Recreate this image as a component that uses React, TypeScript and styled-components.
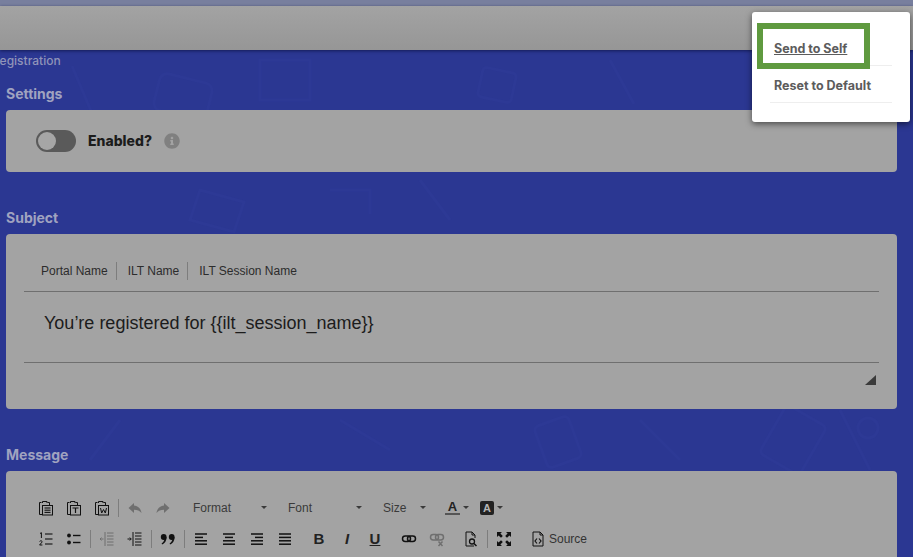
import { FC, ReactNode } from "react";
import styled, { createGlobalStyle } from "styled-components";
import { FaInfoCircle } from "react-icons/fa";

const Global = createGlobalStyle`
  html, body {
    margin: 0;
    padding: 0;
    background: #2b3792;
  }
`;

const UI_FONT = `"Inter", "Noto Sans", sans-serif`;
const EDITOR_FONT = `"Liberation Sans", Arial, sans-serif`;

const Root = styled.div`
  position: relative;
  width: 913px;
  height: 557px;
  overflow: hidden;
  background: #2b3792;
  font-family: ${UI_FONT};
`;
const Pattern = styled.svg`
  position: absolute;
  left: 0;
  top: 0;
  width: 913px;
  height: 557px;
`;
const TopStrip = styled.div`
  position: relative;
  height: 6px;
  background: #787f9e;
`;
const Header = styled.div`
  position: relative;
  height: 44px;
  background: linear-gradient(180deg, #a3a3a3 0%, #969696 100%);
  box-shadow: 0 1px 3px rgba(10, 15, 60, 0.7);
`;
const Content = styled.div`
  position: relative;
  padding: 0 16px 0 6px;
`;
const Crumb = styled.div`
  margin: 4px 0 0 -14px;
  height: 14px;
  font-size: 12px;
  line-height: 14px;
  font-weight: 500;
  color: #9094b9;
`;
const Heading = styled.div<{ $top: number }>`
  margin-top: ${(p) => p.$top}px;
  height: 16px;
  font-size: 14px;
  line-height: 16px;
  font-weight: 700;
  color: #a0a3c0;
`;
const Card = styled.div`
  margin-top: 8px;
  background: #a3a3a3;
  border-radius: 4px;
`;
const SettingsCard = styled(Card)`
  height: 62px;
  padding-left: 30px;
  display: flex;
  align-items: center;
`;
const Toggle = styled.div`
  width: 40px;
  height: 22px;
  box-sizing: border-box;
  border-radius: 11px;
  background: #5a5a5a;
  padding: 2px;
`;
const Knob = styled.div`
  width: 18px;
  height: 18px;
  border-radius: 50%;
  background: #a6a6a6;
`;
const EnabledLabel = styled.div`
  margin: 0 0 2px 12px;
  font-size: 14px;
  font-weight: 800;
  color: #1c1c1c;
`;
const InfoBadge = styled.div`
  margin-left: 12px;
  display: flex;
  color: #808080;
  font-size: 16px;
`;
const SubjectCard = styled(Card)`
  height: 175px;
  padding: 0 18px;
  font-family: ${EDITOR_FONT};
  display: flex;
  flex-direction: column;
`;
const Tags = styled.div`
  height: 58px;
  box-sizing: border-box;
  padding: 28px 0 0 17px;
  display: flex;
  border-bottom: 1px solid #6f6f6f;
`;
const Tag = styled.div`
  height: 18px;
  line-height: 18px;
  font-size: 12px;
  color: #2c2c2c;
  padding-right: 8px;
  margin-right: 11px;
  border-right: 1px solid #7d7d7d;
  &:last-child {
    border-right: none;
  }
`;
const SubjectText = styled.div`
  height: 71px;
  box-sizing: border-box;
  padding: 20px 0 0 20px;
  line-height: 22px;
  font-size: 18px;
  color: #1c1c1c;
  border-bottom: 1px solid #6f6f6f;
`;
const Grip = styled.div`
  align-self: flex-end;
  margin: 12px 3px 0 0;
  width: 0;
  height: 0;
  border-style: solid;
  border-width: 0 0 10px 11px;
  border-color: transparent transparent #3a3a3a transparent;
`;
const MessageCard = styled(Card)`
  height: 120px;
  padding: 21px 0 0 26px;
  font-family: ${EDITOR_FONT};
`;
const ToolRow = styled.div`
  height: 31px;
  display: flex;
  align-items: center;
`;
const Tool = styled.div<{ $off?: boolean; $gap?: number }>`
  width: 28px;
  height: 24px;
  margin-left: ${(p) => p.$gap ?? 0}px;
  display: flex;
  align-items: center;
  justify-content: center;
  color: #111;
  opacity: ${(p) => (p.$off ? 0.35 : 1)};
`;
const Sep = styled.div`
  width: 1px;
  height: 18px;
  margin: 0 2px;
  background: #7d7d7d;
`;
const Combo = styled.div<{ $w: number }>`
  width: ${(p) => p.$w}px;
  box-sizing: border-box;
  padding-left: 16px;
  display: flex;
  align-items: center;
  justify-content: space-between;
  padding-right: 5px;
  font-size: 12px;
  color: #3a3a3a;
`;
const Caret = styled.span`
  width: 0;
  height: 0;
  border-style: solid;
  border-width: 3px 3px 0 3px;
  border-color: #3a3a3a transparent transparent transparent;
`;
const ColorTool = styled.div<{ $gap: number }>`
  margin-left: ${(p) => p.$gap}px;
  display: flex;
  align-items: center;
  gap: 3px;
`;
const LetterA = styled.div`
  width: 15px;
  text-align: center;
  font-size: 13px;
  line-height: 13px;
  font-weight: 700;
  color: #222;
  border-bottom: 2px solid #555;
`;
const LetterABox = styled.div`
  width: 14px;
  height: 14px;
  border-radius: 2px;
  background: #222;
  color: #b5b5b5;
  text-align: center;
  font-size: 11px;
  line-height: 14px;
  font-weight: 700;
`;
const Glyph = styled.span<{ $italic?: boolean; $under?: boolean }>`
  font-family: ${EDITOR_FONT};
  font-size: 15px;
  font-weight: 700;
  color: #222;
  font-style: ${(p) => (p.$italic ? "italic" : "normal")};
  text-decoration: ${(p) => (p.$under ? "underline" : "none")};
`;
const SourceTool = styled.div`
  margin-left: 5px;
  padding-left: 7px;
  display: flex;
  align-items: center;
  gap: 3px;
  font-size: 12px;
  color: #333;
`;
const Popup = styled.div`
  position: absolute;
  left: 752px;
  top: 12px;
  width: 158px;
  height: 110px;
  box-sizing: border-box;
  padding: 17px 18px 0;
  background: #fff;
  border-radius: 3px;
  box-shadow: 0 2px 6px rgba(0, 0, 0, 0.55);
`;
const PopupItem = styled.div<{ $active?: boolean }>`
  height: 37px;
  box-sizing: border-box;
  padding: 12px 0 0 4px;
  font-size: 12.5px;
  line-height: 15px;
  font-weight: 700;
  color: #5c5c5c;
  border-bottom: 1px solid #eeeeee;
  text-decoration: ${(p) => (p.$active ? "underline" : "none")};
`;
const Highlight = styled.div`
  position: absolute;
  left: 757px;
  top: 23px;
  width: 113px;
  height: 46px;
  box-sizing: border-box;
  border: 6px solid #5f9a3f;
`;

const Icon: FC<{ children: ReactNode; w?: number; h?: number }> = ({ children, w = 16, h = 16 }) => (
  <svg width={w} height={h} viewBox="0 0 16 16" fill="none" stroke="#111" strokeWidth="1">
    {children}
  </svg>
);

const Clip: FC<{ inner: ReactNode }> = ({ inner }) => (
  <Icon>
    <path d="M3.500 2.500H1.500v12H4M9.500 2.500H11.500V5" />
    <path d="M4.500 3V1.500h4.500V3" />
    <rect x="4.500" y="5.500" width="10" height="9.500" />
    {inner}
  </Icon>
);

const lines = (ys: number[], x1: number, x2: number, sw = 1.1) =>
  ys.map((y) => <line key={y} x1={x1} x2={x2} y1={y} y2={y} strokeWidth={sw} />);

const Align: FC<{ rows: [number, number][] }> = ({ rows }) => (
  <Icon>
    {rows.map(([a, b], i) => (
      <line key={i} x1={a} x2={b} y1={3 + i * 3.4} y2={3 + i * 3.4} strokeWidth="1.5" />
    ))}
  </Icon>
);

const App: FC = () => (
  <Root>
    <Global />
    <Pattern viewBox="0 0 913 557" fill="none" stroke="#2d3995" strokeWidth="3">
      <rect x="156" y="78" width="54" height="38" rx="8" transform="rotate(14 183 97)" />
      <path d="M72 66l22 52M260 60h50v40h-50z" />
      <rect x="770" y="412" width="46" height="56" rx="5" transform="rotate(30 793 440)" />
      <circle cx="868" cy="428" r="10" />
      <path d="M840 410l30 60M200 190l44 12-10 30-44-12zM420 180l30 40M640 420l40 40M120 420l-30 40M330 190h40v24" />
      <rect x="540" y="420" width="36" height="44" rx="5" transform="rotate(-20 558 442)" />
      <rect x="480" y="70" width="34" height="30" rx="4" transform="rotate(12 497 85)" />
      <path d="M610 60l24 44M340 420l50 30" />
    </Pattern>
    <TopStrip />
    <Header />
    <Content>
      <Crumb>Registration</Crumb>
      <Heading $top={18}>Settings</Heading>
      <SettingsCard>
        <Toggle>
          <Knob />
        </Toggle>
        <EnabledLabel>Enabled?</EnabledLabel>
        <InfoBadge>
          <FaInfoCircle />
        </InfoBadge>
      </SettingsCard>
      <Heading $top={38}>Subject</Heading>
      <SubjectCard>
        <Tags>
          <Tag>Portal Name</Tag>
          <Tag>ILT Name</Tag>
          <Tag>ILT Session Name</Tag>
        </Tags>
        <SubjectText>You’re registered for {"{{ilt_session_name}}"}</SubjectText>
        <Grip />
      </SubjectCard>
      <Heading $top={38}>Message</Heading>
      <MessageCard>
        <ToolRow>
          <Tool>
            <Clip inner={lines([8, 10.2, 12.4], 6.500, 12.500)} />
          </Tool>
          <Tool>
            <Clip inner={<path d="M6.500 8h6M9.500 8v5" strokeWidth="1.2" />} />
          </Tool>
          <Tool>
            <Clip inner={<path d="M6.500 8l1.200 5 1.800-3.500 1.800 3.500L12.500 8" />} />
          </Tool>
          <Sep />
          <Tool $off>
            <Icon>
              <path d="M7 3L1.500 8 7 13V9.800c3.500 0 5.500.8 7.500 3.200-.6-4-3-7-7.500-7.400z" fill="#111" stroke="none" />
            </Icon>
          </Tool>
          <Tool $off>
            <Icon>
              <path d="M9 3l5.500 5L9 13V9.800c-3.500 0-5.500.8-7.500 3.200.6-4 3-7 7.500-7.400z" fill="#111" stroke="none" />
            </Icon>
          </Tool>
          <Combo $w={95}>
            Format
            <Caret />
          </Combo>
          <Combo $w={95}>
            Font
            <Caret />
          </Combo>
          <Combo $w={64}>
            Size
            <Caret />
          </Combo>
          <ColorTool $gap={14}>
            <LetterA>A</LetterA>
            <Caret />
          </ColorTool>
          <ColorTool $gap={11}>
            <LetterABox>A</LetterABox>
            <Caret />
          </ColorTool>
        </ToolRow>
        <ToolRow>
          <Tool>
            <Icon>
              {lines([3, 8, 13], 7, 14.500)}
              <path d="M2 2.500l1.400-.8V7M1.600 10.500c.6-1.200 3-.8 2.400.6L1.600 14h2.800" strokeWidth="1" />
            </Icon>
          </Tool>
          <Tool>
            <Icon>
              {lines([4.500, 11.500], 7, 14.500, 1.400)}
              <circle cx="3" cy="4.500" r="1.900" fill="#111" stroke="none" />
              <circle cx="3" cy="11.500" r="1.900" fill="#111" stroke="none" />
            </Icon>
          </Tool>
          <Sep />
          <Tool $off>
            <Icon>
              {lines([2, 5, 8, 11, 14], 8, 14.500, 1)}
              <path d="M6 1v14M1 8h3.500M2.500 6.500L1 8l1.500 1.500" strokeWidth="1" />
            </Icon>
          </Tool>
          <Tool>
            <Icon>
              {lines([2, 5, 8, 11, 14], 8, 14.500, 1)}
              <path d="M6 1v14M.5 8H4M2.800 6.500L4.300 8 2.800 9.500" strokeWidth="1" />
            </Icon>
          </Tool>
          <Sep />
          <Tool>
            <svg width="16" height="16" viewBox="0 0 16 16" fill="#111">
              <circle cx="3.700" cy="6" r="2.900" />
              <path d="M6.600 6c0 4-2 6.500-4.500 7.500l-.5-1c1.800-1 2.600-2.800 2.800-4.500z" />
              <circle cx="11.700" cy="6" r="2.900" />
              <path d="M14.600 6c0 4-2 6.500-4.500 7.500l-.5-1c1.800-1 2.600-2.800 2.800-4.500z" />
            </svg>
          </Tool>
          <Sep />
          <Tool>
            <Align rows={[[2, 14], [2, 10], [2, 14], [2, 14]]} />
          </Tool>
          <Tool>
            <Align rows={[[2, 14], [4, 12], [2, 14], [2, 14]]} />
          </Tool>
          <Tool>
            <Align rows={[[2, 14], [6, 14], [2, 14], [2, 14]]} />
          </Tool>
          <Tool>
            <Align rows={[[2, 14], [2, 14], [2, 14], [2, 14]]} />
          </Tool>
          <Tool $gap={6}>
            <Glyph>B</Glyph>
          </Tool>
          <Tool>
            <Glyph $italic>I</Glyph>
          </Tool>
          <Tool>
            <Glyph $under>U</Glyph>
          </Tool>
          <Tool $gap={6}>
            <Icon>
              <rect x="1.500" y="5" width="8" height="5.500" rx="2.700" strokeWidth="1.500" />
              <rect x="6.500" y="5" width="8" height="5.500" rx="2.700" strokeWidth="1.500" />
            </Icon>
          </Tool>
          <Tool $off>
            <Icon>
              <rect x="1.500" y="3.500" width="8" height="5.500" rx="2.700" strokeWidth="1.500" />
              <rect x="6.500" y="3.500" width="8" height="5.500" rx="2.700" strokeWidth="1.500" />
              <path d="M9.500 10.500l4 4.500M13.500 10.500l-4 4.500" strokeWidth="1.500" />
            </Icon>
          </Tool>
          <Tool $gap={6}>
            <Icon>
              <path d="M11 15H3V1h6l3 3v3M9 1v3h3" />
              <circle cx="9" cy="10.500" r="2.500" strokeWidth="1.300" />
              <path d="M11 12.500l2.500 2.500" strokeWidth="1.500" />
            </Icon>
          </Tool>
          <Sep />
          <Tool>
            <svg width="16" height="16" viewBox="0 0 16 16" fill="#111">
              <path d="M1 1h5L4.400 2.600 6.800 5 5 6.800 2.600 4.400 1 6zM15 1v5l-1.600-1.600L11 6.800 9.200 5l2.400-2.400L10 1zM1 15v-5l1.600 1.600L5 9.200 6.800 11l-2.400 2.400L6 15zM15 15h-5l1.600-1.600L9.200 11 11 9.200l2.400 2.400L15 10z" />
            </svg>
          </Tool>
          <SourceTool>
            <Icon>
              <path d="M13 15H3V1h7l3 3zM10 1v3h3" />
              <path d="M7 7.500L5 10l2 2.500M9 7.500l2 2.500-2 2.500" strokeWidth="1.200" />
            </Icon>
            Source
          </SourceTool>
        </ToolRow>
      </MessageCard>
    </Content>
    <Popup>
      <PopupItem $active>Send to Self</PopupItem>
      <PopupItem>Reset to Default</PopupItem>
    </Popup>
    <Highlight />
  </Root>
);

export default App;
